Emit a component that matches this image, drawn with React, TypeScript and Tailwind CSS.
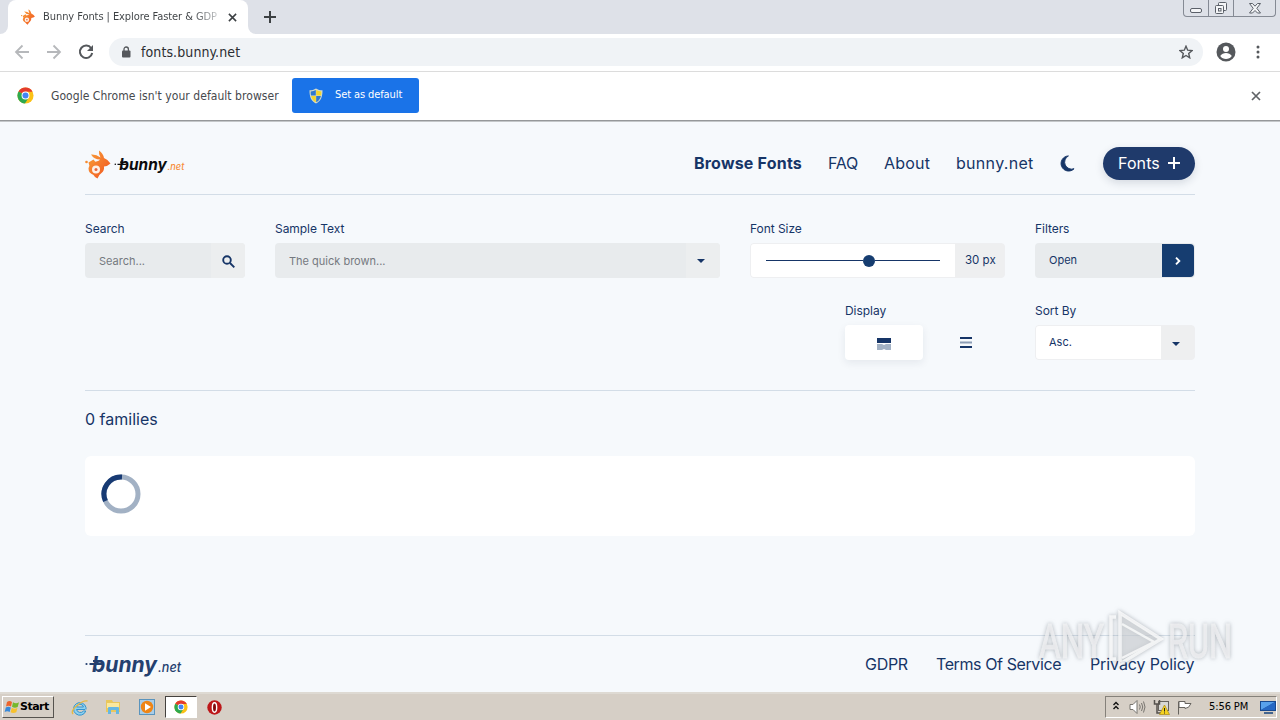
import type { ReactNode } from 'react';

const NAV_LINKS = [
  { label: 'Browse Fonts', className: 'ml-auto w-[108px] font-bold tracking-[0.2px]' },
  { label: 'FAQ', className: 'ml-[26px] w-[30px] tracking-[-0.3px]' },
  { label: 'About', className: 'ml-[26px] w-[46px] tracking-[0.2px]' },
  { label: 'bunny.net', className: 'ml-[26px] w-[78px] tracking-[0.3px]' },
];

const FOOTER_LINKS = [
  { label: 'GDPR', className: 'ml-auto w-[43px] tracking-[-0.3px]' },
  { label: 'Terms Of Service', className: 'ml-[28px] w-[125px] tracking-[-0.4px]' },
  { label: 'Privacy Policy', className: 'ml-[29px] w-[105px] tracking-[-0.1px]' },
];

// Icons
function ChromeIcon({ className }: { className?: string }) {
  return (
    <svg viewBox="0 0 18 18" className={className}>
      <circle cx="9" cy="9" r="8.5" fill="#fbc116" />
      <path d="M9 9 1.6 4.8A8.5 8.5 0 0 1 16.4 5H9Z" fill="#e33b2e" />
      <path d="M9 9 1.6 4.8A8.5 8.5 0 0 0 8.4 17.5L12.5 11Z" fill="#2da94f" />
      <circle cx="9" cy="9" r="4.2" fill="#fff" />
      <circle cx="9" cy="9" r="3.2" fill="#4285f4" />
    </svg>
  );
}

function RabbitMark({ className }: { className?: string }) {
  return (
    <svg viewBox="0 0 26 29" className={className}>
      <defs>
        <linearGradient id="rabbit" x1="0" y1="0" x2="1" y2="1">
          <stop offset="0" stopColor="#f9a13a" />
          <stop offset="1" stopColor="#f0501e" />
        </linearGradient>
      </defs>
      <path
        fill="url(#rabbit)"
        d="M6 4.500Q11 4 15.500 7.500 13.500 4.500 14 .5q4 2.500 5 7.500 4 1.500 6.500 5.500-2.500 2.500-6.500 3 .5 4-2.500 6.500-2.500 1.500-4 5.500-3-1.500-4-3.500-5-2-5-6.500Q4 15 8 12.500l5-1.500q1-.5 2-1.500Q9 9.500 6 4.500Z"
      />
      <circle cx="11" cy="19.500" r="4" fill="#fdf1e8" />
      <circle cx="11" cy="19.500" r="1.500" fill="#e8643c" />
      <circle cx="1.500" cy="12" r="1.300" fill="#f68b30" />
      <path d="M3.500 12.500 8.500 9.500l2 2.500-6 4z" fill="#f68b30" />
    </svg>
  );
}

function BunnyWordmark({ color, netColor, className }: { color: string; netColor: string; className?: string }) {
  return (
    <svg viewBox="0 0 98 26" className={className}>
      <circle cx="1.500" cy="10" r="1.100" fill={color} />
      <path d="M4.500 10H17M8 7h7" stroke={color} strokeWidth="1.800" />
      <text
        x="7"
        y="18"
        fill={color}
        fontFamily="Inter, sans-serif"
        fontSize="21"
        fontWeight="700"
        fontStyle="italic"
        textLength="65"
        lengthAdjust="spacingAndGlyphs"
      >
        bunny
      </text>
      <text
        x="73"
        y="18"
        fill={netColor}
        fontFamily="Inter, sans-serif"
        fontSize="13"
        fontWeight="500"
        fontStyle="italic"
        textLength="23"
        lengthAdjust="spacingAndGlyphs"
      >
        .net
      </text>
    </svg>
  );
}

function CrossIcon({ className }: { className?: string }) {
  return (
    <svg viewBox="0 0 10 10" fill="none" stroke="currentColor" strokeWidth="1.7" className={className}>
      <path d="m1 1 8 8M9 1 1 9" />
    </svg>
  );
}

function ShieldIcon() {
  return (
    <svg viewBox="0 0 14 16" className="h-4 w-3.5">
      <path d="M7 .5c2 1.300 4 1.800 6.500 1.800C13.500 9 12 13 7 15.500 2 13 .5 9 .5 2.300 3 2.300 5 1.800 7 .5Z" fill="#d5dcca" />
      <path d="M6.800 2v5.500H2A16 16 0 0 1 1.700 3.400Q4.500 3.300 6.800 2Z" fill="#2f78cf" />
      <path d="M7.200 2v5.500H12q.4-2 .3-4.100Q9.500 3.300 7.200 2Z" fill="#f3d52c" />
      <path d="M6.800 14.200V8H2.100q1 4.400 4.700 6.200Z" fill="#f3d52c" />
      <path d="M7.200 14.200V8h4.700q-1 4.400-4.700 6.200Z" fill="#2f78cf" />
    </svg>
  );
}

// Browser
function WindowButtons() {
  return (
    <div className="ml-auto mr-1 flex h-[17px] w-[93px] rounded-b-[4px] border border-t-0 border-[#858a94]">
      <div className="flex w-[25px] justify-center border-r border-[#858a94]">
        <div className="mt-2 h-[5px] w-3 rounded-[2px] border border-[#5b6069] bg-[#f4f5f7]" />
      </div>
      <div className="flex w-[25px] justify-center border-r border-[#858a94]">
        <svg viewBox="0 0 14 13" className="mt-0.5 h-[13px] w-3.5" fill="#f4f5f7" stroke="#5b6069">
          <rect x="4.500" y=".5" width="8" height="8" rx="1" />
          <rect x="1.500" y="3.500" width="8" height="8" rx="1" />
          <rect x="4.500" y="6.500" width="2.500" height="2.500" fill="none" />
        </svg>
      </div>
      <div className="flex flex-1 justify-center">
        <svg viewBox="0 0 12 11" className="mt-[3px] h-[11px] w-3" fill="#f4f5f7" stroke="#5b6069">
          <path d="M.5.5h3L6 3.200 8.500.5h3L7.800 5.300l3.700 4.700h-3L6 7.500 3.500 10h-3l3.700-4.700Z" />
        </svg>
      </div>
    </div>
  );
}

function TabStrip() {
  return (
    <div className="flex h-[34px] bg-[#dee1e8]">
      <div className="flex h-2 w-2 self-end bg-white">
        <div className="h-2 w-2 rounded-br-lg bg-[#dee1e8]" />
      </div>
      <div className="flex w-[240px] items-center rounded-t-lg bg-white pl-3">
        <RabbitMark className="h-4 w-4" />
        <span className="ml-[7px] w-[176px] overflow-hidden whitespace-nowrap bg-gradient-to-r from-[#3c4043] from-85% to-[#d5d7d9] bg-clip-text font-['DejaVu_Sans_Condensed','DejaVu_Sans'] text-[11px] tracking-[-0.07px] text-transparent [font-stretch:condensed]">
          Bunny Fonts | Explore Faster &amp; GDP
        </span>
        <CrossIcon className="ml-[9px] h-[9px] w-[9px] text-[#3c4043]" />
      </div>
      <div className="flex h-2 w-2 self-end bg-white">
        <div className="h-2 w-2 rounded-bl-lg bg-[#dee1e8]" />
      </div>
      <svg viewBox="0 0 12 12" className="ml-2 mt-[11px] h-3 w-3" stroke="#3c4043" strokeWidth="2">
        <path d="M6 0v12M0 6h12" />
      </svg>
      <WindowButtons />
    </div>
  );
}

function Toolbar() {
  return (
    <div className="flex h-[38px] items-center border-b border-[#dcdcdc] bg-white pb-px pl-[14px]">
      <svg viewBox="0 0 16 16" className="h-4 w-4" fill="none" stroke="#b6b8bb" strokeWidth="1.800">
        <path d="M15 8H2M8.500 1.500 2 8l6.500 6.500" />
      </svg>
      <svg viewBox="0 0 16 16" className="ml-4 h-4 w-4" fill="none" stroke="#b6b8bb" strokeWidth="1.800">
        <path d="M1 8h13M7.500 1.500 14 8l-6.500 6.500" />
      </svg>
      <svg viewBox="0 0 16 16" className="ml-4 h-4 w-4" fill="none" stroke="#55585c" strokeWidth="2">
        <path d="M13.200 4.200A6.200 6.200 0 1 0 14.200 9" />
        <path d="M15 1v6H9z" fill="#55585c" stroke="none" />
      </svg>
      <div className="ml-[15px] flex h-7 w-[1094px] items-center rounded-full bg-[#f0f3f6] pl-3">
        <svg viewBox="0 0 10 12" className="h-3 w-2.5" fill="#55585c">
          <rect x="1" y="4.500" width="8.500" height="7" rx="1" />
          <path d="M3 5V3.200a2.200 2.200 0 0 1 4.400 0V5" fill="none" stroke="#55585c" strokeWidth="1.300" />
        </svg>
        <span className="ml-2.5 whitespace-nowrap font-['DejaVu_Sans_Condensed','DejaVu_Sans'] text-sm tracking-[0.1px] text-[#2b2d31] [font-stretch:condensed]">
          fonts.bunny.net
        </span>
        <svg viewBox="0 0 14 14" className="ml-auto mr-[10px] h-3.5 w-3.5" fill="none" stroke="#55585c" strokeWidth="1.400">
          <path d="m7 1.200 1.700 4 4.300.4-3.300 2.900 1 4.300L7 10.500l-3.700 2.300 1-4.300L1 5.600l4.300-.4z" />
        </svg>
      </div>
      <svg viewBox="0 0 20 20" className="ml-[13px] h-5 w-5">
        <circle cx="10" cy="10" r="9.500" fill="#55585c" />
        <circle cx="10" cy="7" r="3" fill="#fff" />
        <path d="M4.200 14a7 7 0 0 1 11.600 0 7.200 7.200 0 0 1-11.600 0Z" fill="#fff" />
      </svg>
      <svg viewBox="0 0 4 14" className="ml-[20px] h-3.5 w-1" fill="#55585c">
        <circle cx="2" cy="2" r="1.500" />
        <circle cx="2" cy="7" r="1.500" />
        <circle cx="2" cy="12" r="1.500" />
      </svg>
    </div>
  );
}

function DefaultBrowserBar() {
  return (
    <div className="flex h-[50px] flex-col bg-white">
      <div className="flex h-12 items-center pl-[17px] pb-px font-['DejaVu_Sans_Condensed','DejaVu_Sans'] text-xs [font-stretch:condensed]">
        <ChromeIcon className="h-[17px] w-[17px]" />
        <span className="ml-[17px] w-[229px] whitespace-nowrap tracking-[0.05px] text-[#46494d]">
          Google Chrome isn't your default browser
        </span>
        <div className="ml-3 flex h-[35px] w-[127px] items-center rounded-[3px] bg-[#1a73e8] pl-[17px] text-white">
          <ShieldIcon />
          <span className="ml-3 whitespace-nowrap text-[11px] tracking-[-0.1px]">Set as default</span>
        </div>
        <CrossIcon className="mt-px ml-auto mr-[19px] h-2.5 w-2.5 text-[#606367]" />
      </div>
      <div className="h-px bg-[#96989a]" />
      <div className="h-px bg-[#c4c7c9]" />
    </div>
  );
}

// Page
function Field({ label, className, children }: { label: string; className?: string; children: ReactNode }) {
  return (
    <div className={className}>
      <div className="h-[22px] whitespace-nowrap text-xs leading-[15px] tracking-[-0.05px]">{label}</div>
      {children}
    </div>
  );
}

function Caret() {
  return (
    <svg viewBox="0 0 8 4" className="mt-px h-1 w-2" fill="#163567">
      <path d="M0 0h8L4 4z" />
    </svg>
  );
}

function SiteHeader() {
  return (
    <header className="flex h-[73px] items-center border-b border-[#d3dde7] pt-[11px] pb-px text-base">
      <RabbitMark className="mt-0.5 h-[29px] w-[26px]" />
      <BunnyWordmark color="#0b0b0d" netColor="#f78f3c" className="ml-[3px] mt-[7px] h-[19px] w-[72px]" />
      {NAV_LINKS.map((link) => (
        <a key={link.label} className={`whitespace-nowrap ${link.className}`}>
          {link.label}
        </a>
      ))}
      <svg viewBox="0 0 16 18" className="ml-[25px] h-[17px] w-4" fill="#163567">
        <path d="M9.500 1A8 8 0 1 0 15.500 14.500 7.400 7.400 0 0 1 9.500 1Z" stroke="#163567" />
      </svg>
      <div className="ml-7 flex h-[33px] w-[92px] items-center rounded-full bg-[#1f3a6b] pl-[15px] text-white shadow-[0_3px_8px_rgba(30,40,70,0.15)]">
        <span className="w-[42px] tracking-[0.1px]">Fonts</span>
        <svg viewBox="0 0 12 12" className="ml-2 h-3 w-3" stroke="#fff" strokeWidth="2">
          <path d="M6 0v12M0 6h12" />
        </svg>
      </div>
    </header>
  );
}

function Filters() {
  return (
    <section className="h-[196px] border-b border-[#d3dde7] pt-[26px] text-[11px]">
      <div className="flex gap-[30px]">
        <Field label="Search" className="w-40">
          <div className="flex h-[35px] overflow-hidden rounded bg-[#e8ebed] text-[#75797f]">
            <span className="flex w-[126px] items-center pt-px pl-3.5">Search...</span>
            <span className="flex flex-1 items-center justify-center bg-[#eceeef] pt-px">
              <svg viewBox="0 0 13 13" className="h-[13px] w-[13px]" fill="none" stroke="#163567" strokeWidth="1.900">
                <circle cx="5" cy="5" r="3.800" />
                <path d="m8 8 4.300 4.300" />
              </svg>
            </span>
          </div>
        </Field>
        <Field label="Sample Text" className="w-[445px]">
          <div className="flex h-[35px] overflow-hidden rounded bg-[#e8ebed] text-[#75797f]">
            <span className="flex w-[411px] items-center pt-px pl-3.5">The quick brown...</span>
            <span className="flex flex-1 items-center bg-[#eceeef] pl-[11px]">
              <Caret />
            </span>
          </div>
        </Field>
        <Field label="Font Size" className="w-[255px]">
          <div className="flex h-[35px] overflow-hidden rounded border border-[#eeeff1] bg-[#eeeff0]">
            <div className="flex w-[204px] items-center bg-white px-[15px]">
              <div className="h-px w-[97px] bg-[#163567]" />
              <div className="h-3 w-3 rounded-full bg-[#163d70]" />
              <div className="h-px flex-1 bg-[#163567]" />
            </div>
            <span className="flex items-center whitespace-nowrap pt-px pl-2.5 text-[11.5px]">30 px</span>
          </div>
        </Field>
        <Field label="Filters" className="w-40">
          <div className="flex h-[35px] overflow-hidden rounded bg-[#e8ebed]">
            <span className="w-[127px] pt-[9px] pl-3.5 leading-[17px]">Open</span>
            <span className="mt-px mr-px mb-px flex flex-1 items-center justify-center rounded-r bg-[#163d70]">
              <svg viewBox="0 0 6 8" className="h-2 w-1.5" fill="none" stroke="#fff" strokeWidth="1.900">
                <path d="m1 .7 3.300 3.300L1 7.300" />
              </svg>
            </span>
          </div>
        </Field>
      </div>
      <div className="mt-[25px] flex justify-end gap-[30px]">
        <Field label="Display" className="w-40">
          <div className="flex h-[35px] items-center">
            <div className="flex h-[35px] w-[78px] items-center justify-center rounded bg-white pt-0.5 shadow-[0_3px_8px_rgba(30,40,70,0.08)]">
              <svg viewBox="0 0 14 12" className="h-3 w-3.5">
                <path d="M0 0h14v5H0z" fill="#163567" />
                <path d="M0 6h5l2 1 2-1h5v6H9l-2-1-2 1H0z" fill="#a2b1c4" />
              </svg>
            </div>
            <svg viewBox="0 0 12 11" className="ml-[37px] h-[11px] w-3">
              <path d="M0 0h12v2H0zM0 9h12v2H0z" fill="#163567" />
              <path d="M0 4.500h12v2H0z" fill="#8c9db5" />
            </svg>
          </div>
        </Field>
        <Field label="Sort By" className="w-40">
          <div className="flex h-[35px] overflow-hidden rounded border border-[#eeeff1] bg-[#eeeff0]">
            <span className="flex w-[125px] items-center bg-white pl-[13px]">Asc.</span>
            <span className="flex flex-1 items-center pt-0.5 pl-[11px]">
              <Caret />
            </span>
          </div>
        </Field>
      </div>
    </section>
  );
}

function Spinner() {
  return (
    <svg viewBox="0 0 40 40" className="h-10 w-10" fill="none" strokeWidth="5">
      <circle cx="20" cy="20" r="17" stroke="#a2b1c4" />
      <path d="M21 3A17 17 0 0 0 4.500 27" stroke="#173a73" />
    </svg>
  );
}

function Site() {
  return (
    <main className="flex flex-1 flex-col bg-[#f6f9fc] px-[85px] font-['Inter','Liberation_Sans',sans-serif] text-[#163567]">
      <SiteHeader />
      <Filters />
      <h2 className="mt-4 h-6 text-base leading-6 tracking-[0px]">0 families</h2>
      <div className="mt-[25px] h-20 rounded-md bg-white pt-[18px] pl-4">
        <Spinner />
      </div>
      <footer className="mt-[99px] flex h-[57px] items-center border-t border-[#d3dde7]">
        <BunnyWordmark color="#24406f" netColor="#24406f" className="mt-1.5 h-[26px] w-[98px]" />
        {FOOTER_LINKS.map((link) => (
          <a key={link.label} className={`whitespace-nowrap ${link.className}`}>
            {link.label}
          </a>
        ))}
      </footer>
    </main>
  );
}

// Desktop
function Tray() {
  return (
    <div className="ml-auto mr-[3px] flex h-[22px] w-[172px] items-center border border-t-[#85817a] border-r-white border-b-white border-l-[#85817a] pl-[6px]">
      <svg viewBox="0 0 8 9" className="mb-1 h-[9px] w-2" fill="none" stroke="#111" strokeWidth="1.400">
        <path d="m1.500 4 2.500-2.500L6.500 4M1.500 8 4 5.500 6.500 8" />
      </svg>
      <svg viewBox="0 0 17 16" className="ml-[9px] h-4 w-[17px]" fill="none" stroke="#77746f">
        <path d="M1 5.500h3l4-4v13l-4-4H1z" fill="#fff" />
        <path d="M10.500 5.500q1.500 2.500 0 5M12.500 4q2.500 4 0 8M14.500 2.500q3 5.500 0 11" />
      </svg>
      <svg viewBox="0 0 17 16" className="ml-[7px] h-4 w-[17px]">
        <rect x="5.500" y="2.500" width="10" height="9" fill="#d8d8d4" stroke="#66635e" />
        <path d="M1.500 1v4h5V1M4 5v9h6" fill="none" stroke="#55524e" strokeWidth="1.500" />
        <path d="m11.500 6 5 9.500h-10z" fill="#f5d21f" stroke="#aa8a13" strokeWidth=".7" />
        <path d="M11.500 9v3.500M11.500 13.500v1" stroke="#222" />
      </svg>
      <svg viewBox="0 0 17 15" className="ml-[6px] h-[15px] w-[17px]" fill="#fff" stroke="#66635e">
        <path d="M2.500 1.500v13M3 1.500h6v2h6q-2 5-6 5v-1H3z" />
      </svg>
      <span className="ml-4 w-[40px] whitespace-nowrap font-['DejaVu_Sans_Condensed','DejaVu_Sans'] text-[11px] tracking-[-0.1px] text-black [font-stretch:condensed]">
        5:56 PM
      </span>
      <svg viewBox="0 0 16 14" className="ml-[11px] h-3.5 w-4 shrink-0">
        <rect x="0" y="1" width="16" height="10" fill="#18498f" />
        <path d="M1 2h14L1 10z" fill="#58a1ec" />
        <path d="M1 10 15 2v8z" fill="#2668c4" />
        <path d="M4 12h9v2H4z" fill="#44658e" />
      </svg>
    </div>
  );
}

function Taskbar() {
  return (
    <div className="flex h-7 items-center border-t-2 border-t-[#dedad3] bg-[#d6cfc6]">
      <div className="ml-0.5 flex h-[22px] w-[52px] items-center border border-t-white border-r-[#57544f] border-b-[#57544f] border-l-white pl-px">
        <svg viewBox="0 0 16 16" className="h-4 w-4">
          <path d="M3 3q2.500-2 5 0L7 7.500q-2.500-1.500-5 0z" fill="#ed642b" />
          <path d="M9 3.300q3 1.700 6 0L13.700 8q-3 1.500-5.700-.2z" fill="#75b82b" />
          <path d="M1.800 8.500q2.500-1.500 5 0L5.700 13q-2.500-1.500-5 0z" fill="#3889d9" />
          <path d="M7.800 8.800q3 1.700 5.700 0l-1.200 4.500q-3 1.500-5.700 0z" fill="#f7c12d" />
        </svg>
        <span className="font-['DejaVu_Sans'] text-[11px] font-bold tracking-[-0.5px] text-black">Start</span>
      </div>
      <svg viewBox="0 0 18 17" className="ml-[17px] h-[17px] w-[18px]" fill="none">
        <path d="M14 10.500H5.500A4 4 0 0 0 12.500 12h2.300A6.300 6.300 0 1 1 15 8.500v2M5.500 8h7a3.600 3.600 0 0 0-7 0Z" fill="#8fd2ef" stroke="#3393cf" />
        <path d="M2 15Q-.5 12 6 6.500T16.500 2" stroke="#e6b944" strokeWidth="1.400" />
      </svg>
      <svg viewBox="0 0 16 16" className="ml-4 h-4 w-4">
        <path d="M1 3V1h6l1 2h7v10H1z" fill="#e9c75c" />
        <path d="M2 4h12v5H2z" fill="#fae89d" />
        <path d="M3 15V9q0-1 1-1h9q1 0 1 1v6h-3v-4H6v4z" fill="#66b7e2" />
      </svg>
      <svg viewBox="0 0 16 16" className="ml-[18px] h-4 w-4">
        <rect x=".5" y=".5" width="15" height="15" fill="#a9cde8" stroke="#5a94bd" />
        <circle cx="8" cy="8" r="6.200" fill="#ef8516" />
        <path d="M6 4.300v7.400L12 8z" fill="#fff" />
      </svg>
      <div className="ml-2.5 flex h-[22px] w-8 items-center justify-center border border-t-[#45423e] border-r-white border-b-white border-l-[#45423e] bg-white">
        <ChromeIcon className="h-3.5 w-3.5" />
      </div>
      <svg viewBox="0 0 16 16" className="ml-2.5 h-[15px] w-[15px]">
        <circle cx="8" cy="8" r="7.700" fill="#bd1719" />
        <ellipse cx="8" cy="8" rx="2.300" ry="5" fill="#81090b" stroke="#fff" strokeWidth="1.500" />
      </svg>
      <Tray />
    </div>
  );
}

function Watermark() {
  return (
    <svg
      viewBox="0 0 200 66"
      className="pointer-events-none absolute top-[608px] left-[1036px] h-[66px] w-[200px] drop-shadow-[0_0_2px_rgba(80,90,100,0.55)]"
      fill="none"
      stroke="#fff"
    >
      <g fill="#f4f5f6" stroke="#f4f5f6" strokeWidth="1" opacity=".75" fontFamily="Roboto, sans-serif" fontSize="48">
        <text x="3" y="50" textLength="65" lengthAdjust="spacingAndGlyphs">
          ANY
        </text>
        <text x="132" y="50" textLength="64" lengthAdjust="spacingAndGlyphs">
          RUN
        </text>
      </g>
      <path d="M85 6v50l40-25z" fill="#e3e6e8" stroke="none" opacity=".5" />
      <g strokeWidth="3.500" opacity=".75">
        <path d="M80 9h-5v42h5" />
        <path d="M84 5v51l41-25z" />
        <path d="m86 16 32 18-32 16" strokeWidth="2.500" />
      </g>
    </svg>
  );
}

export default function App() {
  return (
    <div className="relative flex h-[720px] w-[1280px] flex-col overflow-hidden">
      <TabStrip />
      <Toolbar />
      <DefaultBrowserBar />
      <Site />
      <Taskbar />
      <Watermark />
    </div>
  );
}
